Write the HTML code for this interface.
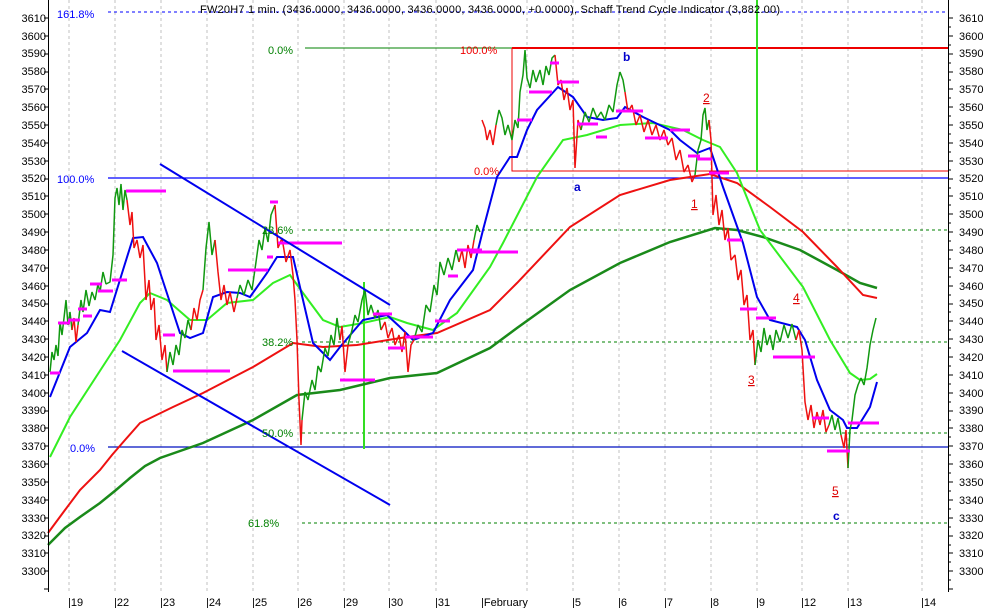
<!DOCTYPE html>
<html><head><meta charset="utf-8"><style>
html,body{margin:0;padding:0;background:#fff;}
svg{display:block;font-family:"Liberation Sans",Arial,sans-serif;}
</style></head><body>
<svg width="994" height="608" viewBox="0 0 994 608" xmlns="http://www.w3.org/2000/svg">
<rect width="994" height="608" fill="#fff"/>
<g stroke="#c0c0c0" stroke-dasharray="3,3" stroke-width="1">
<line x1="69" y1="0" x2="69" y2="592"/><line x1="115" y1="0" x2="115" y2="592"/><line x1="161" y1="0" x2="161" y2="592"/><line x1="207" y1="0" x2="207" y2="592"/><line x1="253" y1="0" x2="253" y2="592"/><line x1="298" y1="0" x2="298" y2="592"/><line x1="344" y1="0" x2="344" y2="592"/><line x1="389" y1="0" x2="389" y2="592"/><line x1="436" y1="0" x2="436" y2="592"/><line x1="527" y1="0" x2="527" y2="592"/><line x1="573" y1="0" x2="573" y2="592"/><line x1="619" y1="0" x2="619" y2="592"/><line x1="665" y1="0" x2="665" y2="592"/><line x1="711" y1="0" x2="711" y2="592"/><line x1="757" y1="0" x2="757" y2="592"/><line x1="802" y1="0" x2="802" y2="592"/><line x1="848" y1="0" x2="848" y2="592"/><line x1="922" y1="0" x2="922" y2="592"/>
</g>
<line x1="108" y1="12" x2="948" y2="12" stroke="#0000ff" stroke-dasharray="3,3"/>
<line x1="108" y1="178" x2="948" y2="178" stroke="#0000ff" stroke-width="1.3"/>
<line x1="108" y1="447" x2="948" y2="447" stroke="#0010c0" stroke-width="1.3"/>
<line x1="305" y1="48" x2="512" y2="48" stroke="#008000" stroke-width="1"/>
<line x1="512" y1="48" x2="948" y2="48" stroke="#ee0000" stroke-width="2"/>
<g stroke="#008000" stroke-dasharray="3,3">
<line x1="302" y1="230" x2="948" y2="230"/><line x1="302" y1="342" x2="948" y2="342"/><line x1="302" y1="433" x2="948" y2="433"/><line x1="302" y1="523" x2="948" y2="523"/>
</g>
<polyline points="512,48 512,171 948,171" fill="none" stroke="#ee0000" stroke-width="1"/>
<line x1="757" y1="0" x2="757" y2="172" stroke="#33dd22" stroke-width="2"/>
<line x1="364" y1="282" x2="364" y2="449" stroke="#33dd22" stroke-width="2"/>
<polyline fill="none" stroke="#1a8a1a" stroke-width="2.5" points="48,545 65,528 80,517 100,503 116,490 130,478 145,466 160,458 203,443 253,420 297,395 340,390 390,378 437,373 490,348 517,328 570,290 620,263 670,242 715,228 737,230 763,237 800,250 837,270 860,283 877,288"/>
<polyline fill="none" stroke="#ee1111" stroke-width="2" points="48,533 65,510 80,490 100,470 112,455 125,440 140,423 173,407 203,393 253,367 293,343 323,347 357,345 407,337 437,333 490,310 517,283 570,227 620,195 670,180 710,174 737,183 770,207 803,232 837,267 863,295 877,298"/>
<polyline fill="none" stroke="#33ee22" stroke-width="2" points="50,457 70,417 107,360 120,340 140,303 150,293 167,300 190,320 207,320 227,303 253,300 273,283 290,275 303,293 323,320 340,327 363,323 390,317 407,323 433,330 457,313 490,267 503,243 537,177 563,140 587,135 620,125 653,123 683,130 703,140 720,147 737,173 760,230 803,287 830,340 850,373 860,380 870,379 877,374"/>
<polyline fill="none" stroke="#0000ee" stroke-width="2" points="50,397 70,347 87,333 100,310 110,312 123,270 133,238 143,237 157,263 180,333 190,338 203,333 213,297 227,292 240,293 250,297 267,273 277,257 293,257 303,300 313,343 327,357 330,360 340,347 363,320 387,315 400,327 413,340 433,333 450,300 473,270 483,230 497,177 510,157 517,157 527,130 537,110 558,87 573,97 587,117 603,120 617,118 625,107 643,117 670,130 680,140 697,153 710,148 723,187 743,243 757,297 770,320 797,327 805,340 817,380 830,410 843,420 847,428 857,428 870,407 877,382"/>
<g fill="none" stroke-width="1.5" stroke-linejoin="bevel">
<polyline stroke="#119911" points="50,372 52,352 54,360 56,345 58,356 60,322 62,335 64,318 66,300 68,325 70,312 72,330"/>
<polyline stroke="#ee1111" points="72,330 74,318 76,342 78,325"/>
<polyline stroke="#119911" points="78,325 81,300 83,312 86,290 89,306 92,292 95,300 98,284 100,292 103,272 106,284 110,282 113,255 115,198 117,188 119,205 121,184 123,210 125,190 127,200"/>
<polyline stroke="#ee1111" points="127,200 130,225 132,212 134,248 137,240 140,258 143,245 146,300 149,280 151,310 154,298 156,340 159,325 162,360 165,345 167,372"/>
<polyline stroke="#119911" points="167,372 170,352 173,365 176,345 179,355 182,330 185,338 188,320 191,330"/>
<polyline stroke="#ee1111" points="191,330 194,308 197,320 200,300 203,290"/>
<polyline stroke="#119911" points="203,290 206,248 209,222 212,255 215,240"/>
<polyline stroke="#ee1111" points="215,240 218,272 221,300 224,285 227,305 230,292 234,312 237,298"/>
<polyline stroke="#119911" points="237,298 240,285 244,295 248,280 252,290 256,262 259,240 262,250 265,228 268,242 271,215 275,205"/>
<polyline stroke="#ee1111" points="275,205 278,248 282,238 286,262 290,250 293,275 295,300 297,340 299,400 301,445 302,420"/>
<polyline stroke="#119911" points="302,420 305,392 308,400 312,380 315,390 318,366 321,372 325,348 328,356 331,335 334,345 337,318 340,340"/>
<polyline stroke="#ee1111" points="340,340 342,326 345,372 348,345"/>
<polyline stroke="#119911" points="348,345 352,330 355,315 358,322 362,300 365,290 368,315 371,305 375,318 378,310 381,330"/>
<polyline stroke="#ee1111" points="381,330 385,322 388,338 392,328 395,345 399,335 402,352 405,332 408,372 411,345 414,340"/>
<polyline stroke="#119911" points="414,340 418,325 422,332 426,305 430,312 434,285 437,295 440,262 444,275 448,258 452,270 456,250 459,262"/>
<polyline stroke="#ee1111" points="459,262 462,250 465,268 468,245 471,258 474,240"/>
<polyline stroke="#119911" points="474,240 477,225 480,232"/>
<polyline stroke="#ee1111" points="482,120 485,128 487,140 490,130 493,145 496,125"/>
<polyline stroke="#119911" points="496,125 499,110 502,118 505,135 508,125 512,140 515,120 518,128 520,92 523,75 525,50 527,78 530,88 533,70 536,82 540,70 543,85 546,66 549,75 552,58 555,55"/>
<polyline stroke="#ee1111" points="555,55 558,85 561,80 564,100 567,88 570,110 573,100 575,168 578,120 581,130"/>
<polyline stroke="#119911" points="581,130 585,112 589,122 593,108 597,118 601,112 605,120 609,105 613,112 617,85 620,72 623,80 625,92"/>
<polyline stroke="#ee1111" points="625,92 628,112 632,105 636,125 640,115 644,132 648,120 652,135 656,125 660,140 664,130 668,145 672,138 676,160 680,150 684,172 688,165 692,182 695,175"/>
<polyline stroke="#119911" points="695,175 698,150 701,140 703,115 705,108 707,130 709,120"/>
<polyline stroke="#ee1111" points="709,120 711,140 713,215 716,195 719,225 722,210 725,240 728,228 731,260 735,255 738,280 741,270 744,305 747,295 750,340 753,330 755,365"/>
<polyline stroke="#119911" points="755,365 758,340 761,352 764,328 767,345 770,335 773,350 776,330 780,342 784,325 788,338 792,324 796,340"/>
<polyline stroke="#ee1111" points="796,340 799,330 802,350 805,402 808,420 811,405 814,428 817,412 820,425 823,410 826,432 829,425"/>
<polyline stroke="#119911" points="829,425 832,415 835,430 838,418 841,435"/>
<polyline stroke="#ee1111" points="841,435 844,448 846,430 848,468"/>
<polyline stroke="#119911" points="848,468 850,430 852,420 855,395 858,385 861,378 864,385 867,368 870,345 873,330 876,318"/>
</g>
<g stroke="#ff00ff" stroke-width="3">
<line x1="50" y1="373" x2="60" y2="373"/><line x1="58" y1="323" x2="70" y2="323"/><line x1="68" y1="320" x2="80" y2="320"/><line x1="78" y1="309" x2="87" y2="309"/><line x1="83" y1="316" x2="92" y2="316"/><line x1="90" y1="284" x2="102" y2="284"/><line x1="98" y1="291" x2="113" y2="291"/><line x1="112" y1="280" x2="127" y2="280"/><line x1="126" y1="191" x2="166" y2="191"/><line x1="163" y1="335" x2="175" y2="335"/><line x1="173" y1="371" x2="230" y2="371"/><line x1="228" y1="270" x2="268" y2="270"/><line x1="267" y1="257" x2="273" y2="257"/><line x1="270" y1="202" x2="278" y2="202"/><line x1="278" y1="243" x2="342" y2="243"/><line x1="340" y1="380" x2="375" y2="380"/><line x1="373" y1="314" x2="392" y2="314"/><line x1="388" y1="348" x2="405" y2="348"/><line x1="405" y1="337" x2="433" y2="337"/><line x1="435" y1="321" x2="450" y2="321"/><line x1="448" y1="276" x2="458" y2="276"/><line x1="457" y1="250" x2="482" y2="250"/><line x1="477" y1="252" x2="490" y2="252"/>
<line x1="470" y1="252" x2="518" y2="252"/><line x1="517" y1="120" x2="532" y2="120"/><line x1="529" y1="92" x2="552" y2="92"/><line x1="550" y1="63" x2="559" y2="63"/><line x1="557" y1="82" x2="579" y2="82"/><line x1="577" y1="124" x2="598" y2="124"/><line x1="596" y1="137" x2="607" y2="137"/><line x1="616" y1="111" x2="643" y2="111"/><line x1="645" y1="138" x2="668" y2="138"/><line x1="670" y1="130" x2="690" y2="130"/><line x1="688" y1="156" x2="700" y2="156"/><line x1="697" y1="159" x2="712" y2="159"/><line x1="709" y1="173" x2="729" y2="173"/><line x1="727" y1="240" x2="742" y2="240"/><line x1="740" y1="309" x2="757" y2="309"/><line x1="756" y1="318" x2="776" y2="318"/><line x1="773" y1="357" x2="815" y2="357"/><line x1="812" y1="418" x2="829" y2="418"/><line x1="827" y1="451" x2="850" y2="451"/><line x1="848" y1="423" x2="879" y2="423"/>
</g>
<line x1="160" y1="164" x2="390" y2="305" stroke="#0000ee" stroke-width="2"/>
<line x1="122" y1="351" x2="390" y2="505" stroke="#0000ee" stroke-width="2"/>
<g font-size="11">
<text x="57" y="18" fill="#0000ff">161.8%</text>
<text x="57" y="183" fill="#0000ff">100.0%</text>
<text x="70" y="452" fill="#0000ff">0.0%</text>
<text x="268" y="54" fill="#008000">0.0%</text>
<text x="262" y="234" fill="#008000">23.6%</text>
<text x="262" y="346" fill="#008000">38.2%</text>
<text x="262" y="437" fill="#008000">50.0%</text>
<text x="248" y="527" fill="#008000">61.8%</text>
<text x="460" y="54" fill="#ee0000">100.0%</text>
<text x="474" y="175" fill="#ee0000">0.0%</text>
<text x="200" y="13" fill="#000" textLength="580" lengthAdjust="spacing">FW20H7 1 min. (3436.0000, 3436.0000, 3436.0000, 3436.0000, +0.0000), Schaff Trend Cycle Indicator (3,882.00)</text>
</g>
<g font-size="12" font-weight="bold" fill="#0000cc">
<text x="574" y="191">a</text><text x="623" y="61">b</text><text x="833" y="520">c</text>
</g>
<g font-size="12" fill="#dd0000" text-decoration="underline">
<text x="691" y="208">1</text><text x="703" y="102">2</text><text x="748" y="384">3</text><text x="793" y="302">4</text><text x="832" y="495">5</text>
</g>
<line x1="48.5" y1="0" x2="48.5" y2="592" stroke="#000"/>
<line x1="948.5" y1="0" x2="948.5" y2="592" stroke="#000"/>
<g stroke="#000">
<path d="M44 18h4M44 36h4M44 54h4M44 72h4M44 89h4M44 107h4M44 125h4M44 143h4M44 161h4M44 179h4M44 196h4M44 214h4M44 232h4M44 250h4M44 268h4M44 286h4M44 304h4M44 321h4M44 339h4M44 357h4M44 375h4M44 393h4M44 411h4M44 428h4M44 446h4M44 464h4M44 482h4M44 500h4M44 518h4M44 536h4M44 553h4M44 571h4M44 589h4"/>
<path d="M948 18h5M948 36h5M948 54h5M948 72h5M948 89h5M948 107h5M948 125h5M948 143h5M948 161h5M948 179h5M948 196h5M948 214h5M948 232h5M948 250h5M948 268h5M948 286h5M948 304h5M948 321h5M948 339h5M948 357h5M948 375h5M948 393h5M948 411h5M948 428h5M948 446h5M948 464h5M948 482h5M948 500h5M948 518h5M948 536h5M948 553h5M948 571h5M948 589h5"/>
<path d="M948 27h3M948 45h3M948 63h3M948 80h3M948 98h3M948 116h3M948 134h3M948 152h3M948 170h3M948 188h3M948 205h3M948 223h3M948 241h3M948 259h3M948 277h3M948 295h3M948 312h3M948 330h3M948 348h3M948 366h3M948 384h3M948 402h3M948 420h3M948 437h3M948 455h3M948 473h3M948 491h3M948 509h3M948 527h3M948 545h3M948 562h3M948 580h3"/>
</g>
<g font-size="11" fill="#000" text-anchor="end">
<text x="46" y="22">3610</text><text x="46" y="40">3600</text><text x="46" y="57">3590</text><text x="46" y="75">3580</text><text x="46" y="93">3570</text><text x="46" y="111">3560</text><text x="46" y="129">3550</text><text x="46" y="147">3540</text><text x="46" y="165">3530</text><text x="46" y="182">3520</text><text x="46" y="200">3510</text><text x="46" y="218">3500</text><text x="46" y="236">3490</text><text x="46" y="254">3480</text><text x="46" y="272">3470</text><text x="46" y="290">3460</text><text x="46" y="307">3450</text><text x="46" y="325">3440</text><text x="46" y="343">3430</text><text x="46" y="361">3420</text><text x="46" y="379">3410</text><text x="46" y="397">3400</text><text x="46" y="414">3390</text><text x="46" y="432">3380</text><text x="46" y="450">3370</text><text x="46" y="468">3360</text><text x="46" y="486">3350</text><text x="46" y="504">3340</text><text x="46" y="522">3330</text><text x="46" y="539">3320</text><text x="46" y="557">3310</text><text x="46" y="575">3300</text>
</g>
<g font-size="11" fill="#000">
<text x="959" y="22">3610</text><text x="959" y="40">3600</text><text x="959" y="57">3590</text><text x="959" y="75">3580</text><text x="959" y="93">3570</text><text x="959" y="111">3560</text><text x="959" y="129">3550</text><text x="959" y="147">3540</text><text x="959" y="165">3530</text><text x="959" y="182">3520</text><text x="959" y="200">3510</text><text x="959" y="218">3500</text><text x="959" y="236">3490</text><text x="959" y="254">3480</text><text x="959" y="272">3470</text><text x="959" y="290">3460</text><text x="959" y="307">3450</text><text x="959" y="325">3440</text><text x="959" y="343">3430</text><text x="959" y="361">3420</text><text x="959" y="379">3410</text><text x="959" y="397">3400</text><text x="959" y="414">3390</text><text x="959" y="432">3380</text><text x="959" y="450">3370</text><text x="959" y="468">3360</text><text x="959" y="486">3350</text><text x="959" y="504">3340</text><text x="959" y="522">3330</text><text x="959" y="539">3320</text><text x="959" y="557">3310</text><text x="959" y="575">3300</text>
</g>
<g font-size="11" fill="#000">
<text x="68" y="606">|19</text><text x="114" y="606">|22</text><text x="160" y="606">|23</text><text x="206" y="606">|24</text><text x="252" y="606">|25</text><text x="297" y="606">|26</text><text x="343" y="606">|29</text><text x="388" y="606">|30</text><text x="435" y="606">|31</text><text x="481" y="606">|February</text><text x="572" y="606">|5</text><text x="618" y="606">|6</text><text x="664" y="606">|7</text><text x="710" y="606">|8</text><text x="756" y="606">|9</text><text x="801" y="606">|12</text><text x="847" y="606">|13</text><text x="921" y="606">|14</text>
</g>
</svg>
</body></html>
